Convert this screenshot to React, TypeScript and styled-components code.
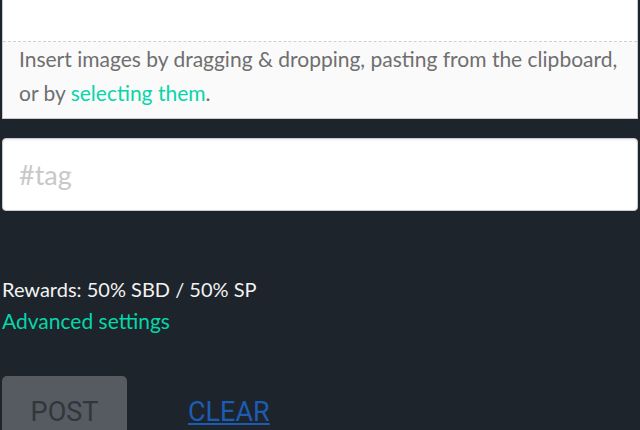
import React from 'react';
import styled, { createGlobalStyle } from 'styled-components';

const GlobalStyle = createGlobalStyle`
  html, body {
    margin: 0;
    padding: 0;
    background: #1d242b;
    overflow: hidden;
  }
  body {
    font-family: Lato, "Open Sans", sans-serif;
  }
`;

const Page = styled.div`
  width: 640px;
  padding: 0 2px;
  box-sizing: border-box;
  display: flex;
  flex-direction: column;
  & > * {
    flex-shrink: 0;
  }
`;

const Editor = styled.div`
  border: 1px solid #c9c9c9;
  border-top: none;
  background: #fafafa;
`;

const TextArea = styled.div`
  height: 41px;
  background: #fff;
  border-bottom: 1px dashed #cfcfcf;
`;

const DropHint = styled.p`
  margin: 0;
  padding: 0 0 8px 16px;
  font-size: 21px;
  line-height: 34px;
  color: #6f6f6f;
`;

const Link = styled.a<{ $size?: number }>`
  color: #06d6a9;
  text-decoration: none;
  cursor: pointer;
  ${(p) => (p.$size ? `font-size: ${p.$size}px;` : '')}
`;

const TagInput = styled.input`
  margin-top: 19px;
  height: 73px;
  box-sizing: border-box;
  border: 1px solid #cacaca;
  border-radius: 4px;
  padding: 0 16px;
  font-family: Lato, "Open Sans", sans-serif;
  font-size: 27px;
  color: #333;
  background: #fff;
  outline: none;
  box-shadow: inset 0 1px 2px rgba(0, 0, 0, 0.08);
  &::placeholder {
    color: #c8c8c8;
  }
`;

const Settings = styled.div`
  margin-top: 62px;
  display: flex;
  flex-direction: column;
  font-size: 20px;
  line-height: 32px;
`;

const Rewards = styled.div`
  color: #f2f2f2;
`;

const Actions = styled.div`
  margin-top: 39px;
  display: flex;
  align-items: flex-start;
  gap: 61px;
`;

const PostButton = styled.button`
  width: 125px;
  height: 70px;
  border: none;
  border-radius: 5px;
  background: #555b60;
  color: #30373c;
  font-family: Roboto, sans-serif;
  font-size: 27px;
  line-height: 32px;
  padding: 20px 0 0;
  display: flex;
  justify-content: center;
  align-items: flex-start;
  text-transform: uppercase;
`;

const ClearLink = styled.a`
  display: block;
  font-family: Roboto, sans-serif;
  font-size: 27px;
  line-height: 32px;
  color: #1c5cb2;
  text-decoration: underline;
  padding-top: 20px;
  text-transform: uppercase;
  cursor: pointer;
`;

export default function App() {
  return (
    <Page>
      <GlobalStyle />
      <Editor>
        <TextArea />
        <DropHint>
          Insert images by dragging &amp; dropping, pasting from the clipboard, or by{' '}
          <Link>selecting them</Link>.
        </DropHint>
      </Editor>
      <TagInput placeholder="#tag" />
      <Settings>
        <Rewards>Rewards: 50% SBD / 50% SP</Rewards>
        <Link $size={21}>Advanced settings</Link>
      </Settings>
      <Actions>
        <PostButton>Post</PostButton>
        <ClearLink>Clear</ClearLink>
      </Actions>
    </Page>
  );
}
